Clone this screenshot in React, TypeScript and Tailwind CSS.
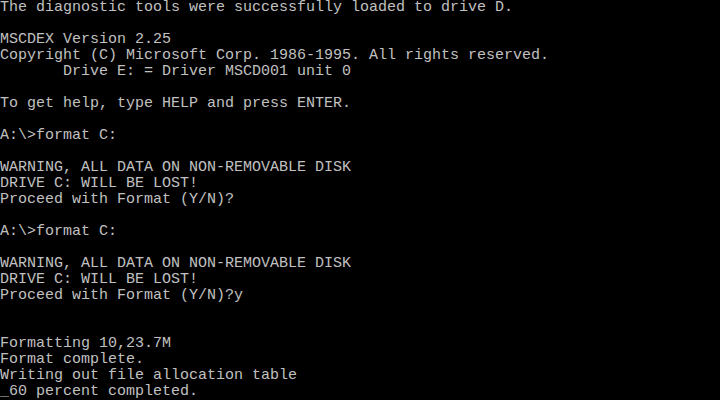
const lines = [
  "The diagnostic tools were successfully loaded to drive D.",
  "",
  "MSCDEX Version 2.25",
  "Copyright (C) Microsoft Corp. 1986-1995. All rights reserved.",
  "       Drive E: = Driver MSCD001 unit 0",
  "",
  "To get help, type HELP and press ENTER.",
  "",
  "A:\\>format C:",
  "",
  "WARNING, ALL DATA ON NON-REMOVABLE DISK",
  "DRIVE C: WILL BE LOST!",
  "Proceed with Format (Y/N)?",
  "",
  "A:\\>format C:",
  "",
  "WARNING, ALL DATA ON NON-REMOVABLE DISK",
  "DRIVE C: WILL BE LOST!",
  "Proceed with Format (Y/N)?y",
  "",
  "",
  "Formatting 10,23.7M",
  "Format complete.",
  "Writing out file allocation table",
  "_60 percent completed.",
];

export default function App() {
  return (
    <div className="w-[720px] h-[400px] bg-black overflow-hidden text-[#c0c0c0] font-['Liberation_Mono',monospace] text-[15px]">
      {lines.map((line, i) => (
        <div key={i} className="h-4 leading-4 whitespace-pre">
          {line}
        </div>
      ))}
    </div>
  );
}
